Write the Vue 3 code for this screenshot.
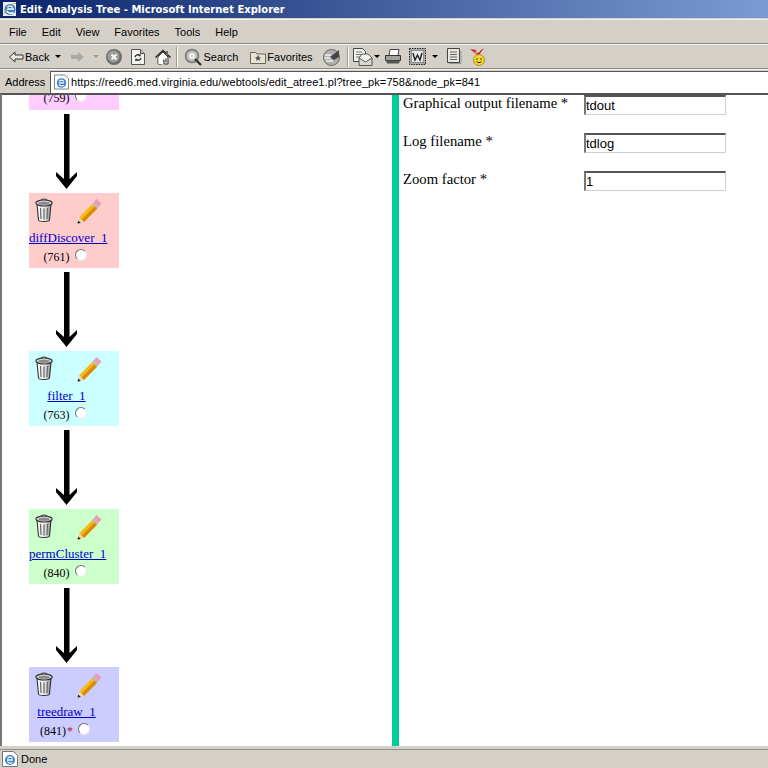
<script setup>
const menus = ['File', 'Edit', 'View', 'Favorites', 'Tools', 'Help']

// the first node is scrolled away, only its id row still shows
const nodes = [
  { id: 759, color: '#ffccff', clipped: true },
  { name: 'diffDiscover_1', id: 761, color: '#ffcccc' },
  { name: 'filter_1', id: 763, color: '#ccffff' },
  { name: 'permCluster_1', id: 840, color: '#ccffcc' },
  { name: 'treedraw_1', id: 841, color: '#ccccff', current: true },
]

const fields = [
  { label: 'Graphical output filename *', value: 'tdout' },
  { label: 'Log filename *', value: 'tdlog' },
  { label: 'Zoom factor *', value: '1' },
]
</script>

<template>
  <div class="window">
    <div class="titlebar">
      <svg class="ie" width="16" height="16" viewBox="0 0 16 16">
        <rect x="1" y="1" width="13" height="14" fill="#e8eef8" />
        <circle cx="8" cy="8.500" r="5.500" fill="#3a80d0" />
        <path d="M5 8h7M5.500 6.500c1-2 4-2 5 0M5 10c1 2.500 4 3 6.500 1.500" stroke="#fff" stroke-width="1.600" fill="none" />
        <path d="M2 13c3-7 8-10 12-11" stroke="#d8a030" stroke-width="1" fill="none" />
      </svg>
      <span>Edit Analysis Tree - Microsoft Internet Explorer</span>
    </div>

    <div class="menubar">
      <span v-for="m in menus" :key="m" class="menu">{{ m }}</span>
    </div>

    <div class="toolbar">
      <svg class="back" width="16" height="12" viewBox="0 0 16 12">
        <path d="M7 1 1.500 6 7 11V8h8V4H7z" fill="#e8e8e0" stroke="#333" />
      </svg>
      <span class="tool-text">Back</span>
      <span class="caret c-back"></span>
      <svg class="forward" width="14" height="12" viewBox="0 0 14 12">
        <path d="M7 1 13 6 7 11V8H0V4h7z" fill="#a8a8a4" />
      </svg>
      <span class="caret light c-fwd"></span>
      <svg class="stop" width="16" height="16" viewBox="0 0 16 16">
        <circle cx="8" cy="8" r="8" fill="#6e6e6e" />
        <circle cx="7.500" cy="7.500" r="6" fill="#9c9c9c" />
        <path d="m5.500 5.500 5 5m0-5-5 5" stroke="#fff" stroke-width="1.800" />
      </svg>
      <svg class="refresh" width="14" height="16" viewBox="0 0 14 16">
        <path d="M.5.500h9l4 4v11H.5z" fill="#f4f4f0" stroke="#555" />
        <path d="M9.500.500v4h4" fill="#bbb" stroke="#555" />
        <path d="M4 8c.5-2 3-3 5-1.500M10 9c-.5 2-3 3-5 1.500" stroke="#333" stroke-width="1.400" fill="none" />
        <path d="m9.800 4.500-.2 3-2.600-.5zM4.200 12.500l.2-3 2.600.5z" fill="#333" />
      </svg>
      <svg class="home" width="16" height="16" viewBox="0 0 16 16">
        <path d="M3 8v7h4v-4h2v4h4V8L8 3z" fill="#f4f4f0" stroke="#333" />
        <path d="M3.500 8 8 3.500V15H3.500z" fill="#fff" />
        <path d="M10 9.500h2v4h-2z" fill="#888" />
        <path d="M.5 8.500 8 1.500l7.500 7" fill="none" stroke="#222" stroke-width="1.400" />
        <rect x="11" y="2" width="2" height="4" fill="#666" />
      </svg>
      <span class="sep s-first"></span>
      <svg class="search" width="18" height="18" viewBox="0 0 18 18">
        <circle cx="8" cy="8" r="6.500" fill="#b4b8b4" stroke="#777" stroke-width="1.500" />
        <circle cx="8" cy="8" r="3.500" fill="#e8eae8" />
        <path d="m11 11 6 6" stroke="#333" stroke-width="2.400" />
      </svg>
      <span class="tool-text">Search</span>
      <svg class="favs" width="16" height="14" viewBox="0 0 16 14">
        <path d="M.5 2.500h5l1.500 1.500h8.500v9.500H.5z" fill="#e8e4d0" stroke="#666" />
        <path d="m8 5 1 2 2 .3-1.500 1.500.4 2L8 9.800l-1.900 1 .4-2L5 7.300 7 7z" fill="#555" />
      </svg>
      <span class="tool-text">Favorites</span>
      <svg class="media" width="18" height="18" viewBox="0 0 18 18">
        <circle cx="8.500" cy="9.500" r="8" fill="#b0b0b0" stroke="#666" />
        <path d="M2 7h6M1.500 10h6M3 13h7" stroke="#eee" stroke-width="1.500" />
        <path d="m7 9 9-7v7l-5 3z" fill="#444" />
      </svg>
      <span class="sep s-second"></span>
      <svg class="mail" width="20" height="18" viewBox="0 0 20 18">
        <path d="M.5.500h9l3 3v10H.5z" fill="#f0f0ec" stroke="#444" />
        <path d="M3 4h6M3 6.500h5M3 9h4" stroke="#777" />
        <path d="M6 10h13v7.500H6z" fill="#d8d8d0" stroke="#555" />
        <path d="m6 10 3-4h6l4 4-6.500 4z" fill="#f0f0ec" stroke="#555" />
      </svg>
      <span class="caret c-mail"></span>
      <svg class="print" width="16" height="15" viewBox="0 0 16 15">
        <path d="M5 .5h9l-1 6H4z" fill="#fff" stroke="#444" />
        <path d="M.5 6.500h15v5H.5z" fill="#a0a09c" stroke="#333" />
        <path d="M1 11.500h14l-1 3H2z" fill="#555" />
      </svg>
      <svg class="word" width="17" height="17" viewBox="0 0 17 17">
        <rect x=".5" y=".5" width="16" height="16" fill="#aaa" stroke="#222" stroke-dasharray="1.500 1" />
        <rect x="2.500" y="2.500" width="12" height="12" fill="#e8e8e4" stroke="#555" stroke-dasharray="1 1" />
        <path d="m4 5 2 7 2.500-5L11 12l2-7" stroke="#222" stroke-width="1.400" fill="none" />
      </svg>
      <span class="caret c-word"></span>
      <svg class="note" width="16" height="17" viewBox="0 0 16 17">
        <path d="M1.500.500h12v14h-12z" fill="#e8e8e0" stroke="#444" />
        <path d="M4 4h7M4 6.500h7M4 9h7M4 11.500h7" stroke="#666" />
        <path d="M3 15.500h12V3" stroke="#999" fill="none" />
      </svg>
      <svg class="medal" width="17" height="18" viewBox="0 0 17 18">
        <path d="m0 1 6 1 1 5zM14 0l-4 3-1 4zM4 3l4 5 3-5-3 2z" fill="#d02020" />
        <circle cx="9" cy="12" r="5.500" fill="#f4d830" stroke="#b09018" />
        <circle cx="7" cy="11" r=".8" fill="#222" />
        <circle cx="11" cy="11" r=".8" fill="#222" />
        <path d="M6.500 13.500c1.500 1.500 3.500 1.500 5 0" stroke="#222" fill="none" />
      </svg>
    </div>

    <div class="addressbar">
      <span class="address-label">Address</span>
      <div class="address-box">
        <svg width="15" height="16" viewBox="0 0 16 16">
          <path d="M.5.500h11l4 4v11H.5z" fill="#fff" stroke="#777" />
          <circle cx="8" cy="9" r="5" fill="#3a80d0" />
          <path d="M5 9h6M5.500 7.500c1-2 4-2 5 0M5.500 10.500c1 2 3.500 2 5 1" stroke="#fff" stroke-width="1.300" fill="none" />
        </svg>
        <span class="url">https://reed6.med.virginia.edu/webtools/edit_atree1.pl?tree_pk=758&amp;node_pk=841</span>
      </div>
    </div>

    <div class="content">
      <div class="tree-pane">
        <div class="tree">
          <template v-for="(n, i) in nodes" :key="n.id">
            <svg v-if="i > 0" class="arrow" width="21" height="75" viewBox="0 0 21 75">
              <path d="M8 0h5.500v65l7.500-7v4L10.500 75 0 62v-4l8 7z" fill="#000" />
            </svg>
            <div :class="['node', { clipped: n.clipped }]" :style="{ background: n.color }">
              <div v-if="!n.clipped" class="node-icons">
                <svg width="18" height="25" viewBox="0 0 18 25">
                  <defs>
                    <linearGradient :id="'can' + i" x1="0" x2="1" y1="0" y2="0">
                      <stop offset="0" stop-color="#fff" />
                      <stop offset=".55" stop-color="#e4e4e4" />
                      <stop offset="1" stop-color="#8c8c8c" />
                    </linearGradient>
                  </defs>
                  <path d="M2 6l1.500 16c.2 2 10.800 2 11 0L16 6z" :fill="'url(#can' + i + ')'" stroke="#333" stroke-width="1.100" />
                  <ellipse cx="9" cy="5" rx="8.200" ry="3" fill="#d0d0d0" stroke="#333" stroke-width="1.100" />
                  <ellipse cx="9" cy="5.300" rx="5.500" ry="1.500" fill="#8a8a8a" />
                  <path d="M6 2.500c0-2 6-2 6 0" fill="none" stroke="#444" stroke-width="1.100" />
                  <path d="M5.500 10l.5 11M9 10.500v11M12.500 10l-.5 11" stroke="#666" stroke-width="1.200" />
                </svg>
                <svg width="25" height="26" viewBox="0 0 25 26">
                  <path d="M19.500 1l5 4.500-3 3.500-5-4.500z" fill="#f09ab8" />
                  <path d="M16.500 4.500l5 4.500-1.500 1.700-5-4.500z" fill="#b8b8b8" />
                  <path d="M15 6.200l5 4.500L7 24 2 19.500z" fill="#f8b818" />
                  <path d="M17.500 8.500 4.500 21.700 7 24l13-13.300z" fill="#d88a08" />
                  <path d="M2 19.500 0.500 25.500 7 24z" fill="#f0d8a8" />
                  <path d="M1.300 22.500.5 25.500 3.800 25z" fill="#222" />
                </svg>
              </div>
              <a v-if="n.name" class="node-link" href="#">{{ n.name }}</a>
              <div class="node-id">
                <span>({{ n.id }})</span><span v-if="n.current" class="star">*</span>
                <span class="radio"></span>
              </div>
            </div>
          </template>
        </div>
      </div>
      <div class="divider"></div>
      <div class="form-pane">
        <div v-for="f in fields" :key="f.label" class="field">
          <label>{{ f.label }}</label>
          <input type="text" :value="f.value" />
        </div>
      </div>
    </div>

    <div class="statusbar">
      <svg width="16" height="16" viewBox="0 0 16 16">
        <path d="M.5.500h11l4 4v11H.5z" fill="#fff" stroke="#777" />
        <circle cx="8" cy="9" r="5" fill="#3a80d0" />
        <path d="M5 9h6M5.500 7.500c1-2 4-2 5 0M5.500 10.500c1 2 3.500 2 5 1" stroke="#fff" stroke-width="1.300" fill="none" />
      </svg>
      <span>Done</span>
    </div>
  </div>
</template>

<style scoped>
.window {
  width: 768px;
  height: 768px;
  display: flex;
  flex-direction: column;
  overflow: hidden;
  background: #d4d0c8;
  font-family: "Liberation Sans", Arial, sans-serif;
  font-size: 11px;
  color: #000;
}

.titlebar {
  height: 18px;
  flex: none;
  display: flex;
  align-items: center;
  gap: 2px;
  padding-left: 2px;
  color: #fff;
  font-family: "DejaVu Sans", sans-serif;
  font-weight: bold;
  font-size: 10px;
  background: linear-gradient(to right, #0a246a, #7c9bd2);
}

.menubar {
  height: 25px;
  flex: none;
  display: flex;
  align-items: center;
  border-top: 1px solid #f4f2ec;
  border-bottom: 1px solid #8c8a84;
  box-sizing: border-box;
  margin-top: 1px;
  padding-left: 9px;
  gap: 15px;
}

.toolbar {
  height: 25px;
  flex: none;
  box-sizing: border-box;
  border-top: 1px solid #f4f2ec;
  border-bottom: 1px solid #8c8a84;
  display: flex;
  align-items: center;
}

.tool-text { margin-left: 1px; }

.back { margin-left: 8px; }
.forward { margin-left: 10px; }
.stop { margin-left: 7px; }
.refresh { margin-left: 9px; }
.home { margin-left: 10px; }
.favs { margin-left: 12px; }
.media { margin-left: 10px; }
.print { margin-left: 5px; }
.word { margin-left: 8px; }
.note { margin-left: 8px; }
.medal { margin-left: 8px; }

.caret {
  width: 0;
  height: 0;
  border-left: 3px solid transparent;
  border-right: 3px solid transparent;
  border-top: 3px solid #000;
}
.caret.light { border-top-color: #999; }
.c-back { margin-left: 6px; }
.c-fwd { margin-left: 8px; }
.c-mail { margin-left: 1px; }
.c-word { margin-left: 6px; }

.sep {
  width: 1px;
  height: 20px;
  background: #9c9a94;
  border-right: 1px solid #fff;
}
.s-first { margin: 0 6px 0 5px; }
.s-second { margin: 0 4px 0 6px; }

.addressbar {
  height: 24px;
  flex: none;
  box-sizing: border-box;
  border-top: 1px solid #f4f2ec;
  display: flex;
  align-items: center;
}

.address-label { margin-left: 5px; width: 45px; flex: none; }

.url { letter-spacing: .08px; }

.address-box {
  flex: 1;
  height: 22px;
  box-sizing: border-box;
  padding-left: 3px;
  display: flex;
  align-items: center;
  gap: 2px;
  background: #fff;
  border-top: 1px solid #555;
  border-left: 1px solid #555;
}

.content {
  height: 653px;
  flex: none;
  display: flex;
  background: #fff;
  border-top: 2px solid #555;
  border-left: 2px solid #777;
  box-sizing: border-box;
  overflow: hidden;
}

.tree-pane {
  width: 390px;
  flex: none;
  overflow: hidden;
}

.tree {
  padding-left: 27px;
  display: flex;
  flex-direction: column;
  align-items: flex-start;
}

.arrow {
  display: block;
  margin: 4px 0 4px 27px;
}

.node {
  width: 90px;
  height: 75px;
  box-sizing: border-box;
  padding: 5px 15px 0 0;
  display: flex;
  flex-direction: column;
  align-items: safe center;
  font-family: "Liberation Serif", "Times New Roman", serif;
  font-size: 12px;
}

.node.clipped {
  height: 15px;
  padding: 0 15px 4px 0;
  justify-content: flex-end;
  overflow: hidden;
}

.node-icons {
  align-self: flex-start;
  height: 26px;
  margin-left: 6px;
  display: flex;
  gap: 24px;
}

.node-link {
  margin-top: 7px;
  color: #0000cc;
  font-size: 13px;
  line-height: 14px;
  white-space: nowrap;
}

.node-id {
  margin: 5px 3px 0 0;
  display: flex;
  align-items: center;
  flex: none;
}

.star {
  color: #cc0033;
  margin-left: 1px;
}

.radio {
  width: 12px;
  height: 12px;
  margin: -6px 0 0 5px;
  border-radius: 50%;
  box-sizing: border-box;
  background: #fff;
  border: 1px solid #707070;
  border-right-color: #e8e8e8;
  border-bottom-color: #e8e8e8;
}

.divider {
  width: 7px;
  flex: none;
  background: #00cc99;
}

.form-pane {
  flex: 1;
  padding: 0 0 0 4px;
  display: flex;
  flex-direction: column;
  gap: 18px;
}

.field {
  display: flex;
  align-items: flex-start;
  height: 20px;
}

.field label {
  width: 181px;
  flex: none;
  font-family: "Liberation Serif", "Times New Roman", serif;
  font-size: 14.7px;
  line-height: 17px;
}

.field input {
  width: 142px;
  height: 20px;
  box-sizing: border-box;
  padding: 0;
  font-family: "Liberation Sans", Arial, sans-serif;
  font-size: 13px;
  border-style: solid;
  border-width: 2px 1px 1px 2px;
  border-color: #555 #d4d0c8 #d4d0c8 #777;
  outline: none;
  background: #fff;
  color: #000;
}

.statusbar {
  flex: 1;
  display: flex;
  align-items: center;
  gap: 3px;
  padding-left: 2px;
  border-top: 1px solid #908e88;
  margin-top: 3px;
}
</style>

<style>
html, body { margin: 0; background: #d4d0c8; }
</style>
